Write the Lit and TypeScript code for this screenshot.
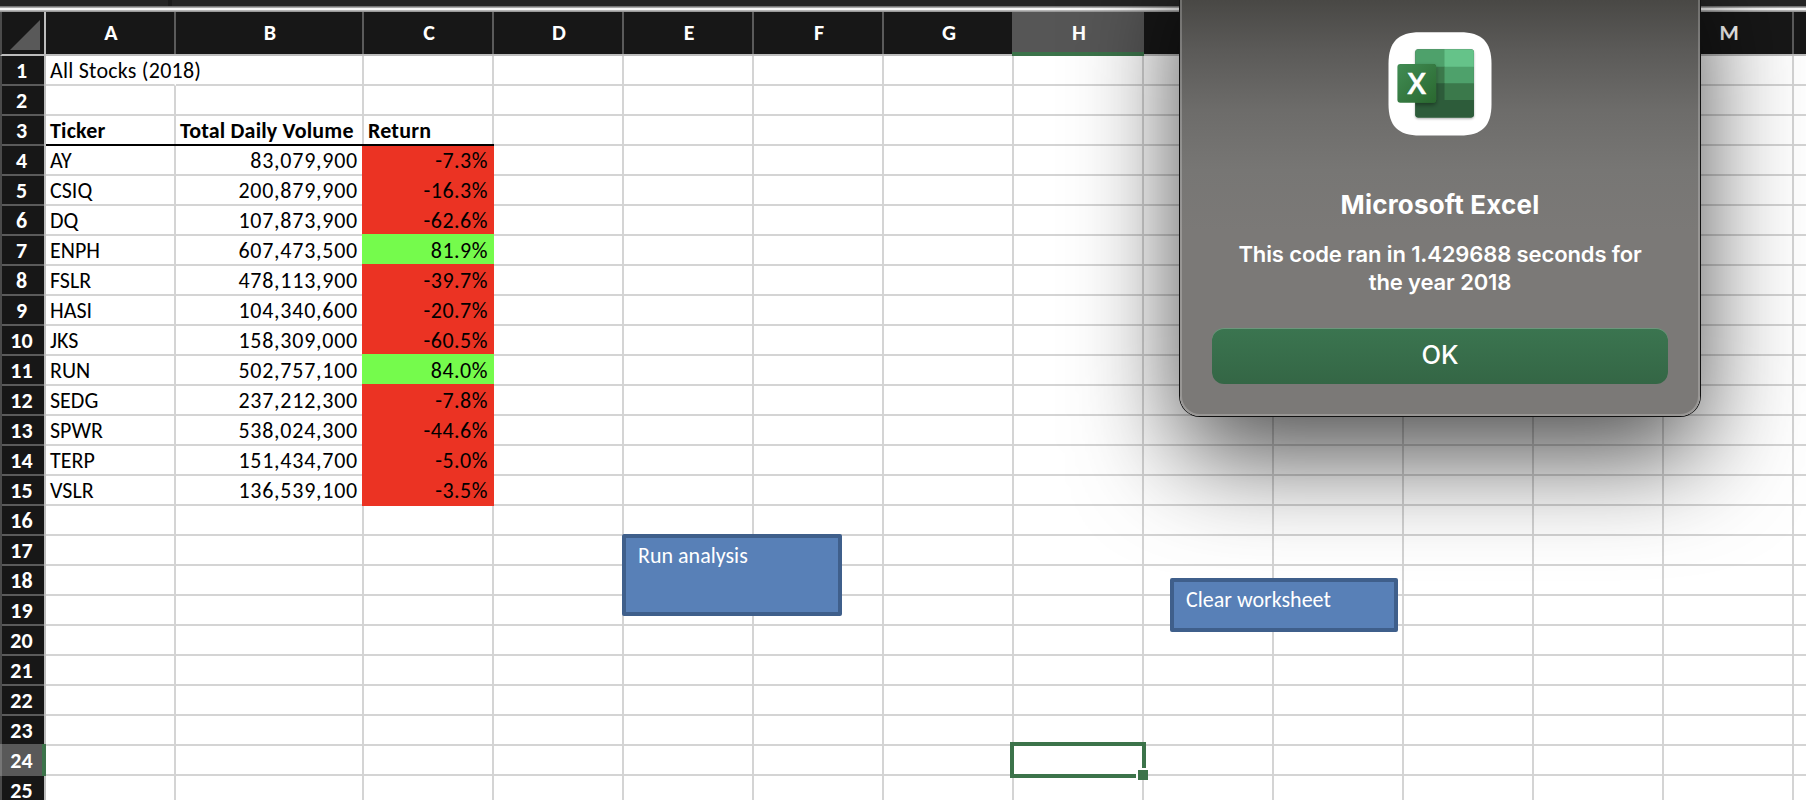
import { LitElement, html, css, svg, nothing } from "lit";
import { customElement } from "lit/decorators.js";
import { classMap } from "lit/directives/class-map.js";

interface Stock { ticker: string; volume: string; ret: string; }

const STOCKS: Stock[] = [
  ["AY", "83,079,900", "-7.3%"],
  ["CSIQ", "200,879,900", "-16.3%"],
  ["DQ", "107,873,900", "-62.6%"],
  ["ENPH", "607,473,500", "81.9%"],
  ["FSLR", "478,113,900", "-39.7%"],
  ["HASI", "104,340,600", "-20.7%"],
  ["JKS", "158,309,000", "-60.5%"],
  ["RUN", "502,757,100", "84.0%"],
  ["SEDG", "237,212,300", "-7.8%"],
  ["SPWR", "538,024,300", "-44.6%"],
  ["TERP", "151,434,700", "-5.0%"],
  ["VSLR", "136,539,100", "-3.5%"],
].map(([ticker, volume, ret]) => ({ ticker, volume, ret }));

const COLUMNS = "ABCDEFGHIJKLMN".split("");
const ROWS = Array.from({ length: 25 }, (_, i) => i + 1);
const ACTIVE = { col: "H", row: 24 };

@customElement("sheet-grid")
export class SheetGrid extends LitElement {
  static styles = css`
    :host { display: block; font-family: Carlito, Lato, sans-serif; color: #000; }
    .grid {
      display: grid;
      grid-template-columns: 46px 130px 188px repeat(12, 130px);
      grid-template-rows: 44px;
      grid-auto-rows: 30px;
    }
    .corner, .col, .row, .cell { box-sizing: border-box; white-space: nowrap; min-width: 0; }
    .corner { background: #171717; border-right: 2px solid #bdbdbd; border-bottom: 2px solid #bdbdbd; border-left: 2px solid #4b4b4b; }
    .corner svg { display: block; }
    .col {
      background: linear-gradient(#5b5b5b, #5b5b5b) right / 2px 100% no-repeat #171717;
      border-bottom: 2px solid #bdbdbd;
      color: #fff; font-size: 22px; font-weight: 700; text-align: center;
      line-height: 42px;
    }
    .col.on { background: #565656; border-bottom: 4px solid #3c734a; margin-left: -2px; padding-left: 2px; z-index: 1; }
    .row {
      background: #171717; color: #fff; font-size: 22px; font-weight: 700;
      border-left: 2px solid #4b4b4b; border-right: 2px solid #bdbdbd;
      text-align: center; line-height: 30px; padding-right: 3px;
      box-shadow: inset 0 -2px #5b5b5b;
    }
    .row.on { background: #595959; border-left-color: #767676; border-right: 4px solid #3c734a; margin-top: -2px; padding: 2px 1px 0 0; box-shadow: none; z-index: 1; }
    .cell {
      border-right: 2px solid #d4d4d4; border-bottom: 2px solid #d4d4d4;
      padding: 0 4px; font-size: 22px; line-height: 30px; background: #fff;
    }
    .cell.open { border-right-color: #fff; overflow: visible; }
    .spill { position: relative; z-index: 1; letter-spacing: .23px; }
    .head { font-weight: 700; height: 28px; border-bottom: 0; box-shadow: 0 2px #000; position: relative; z-index: 1; letter-spacing: .18px; }
    .num { text-align: right; letter-spacing: .75px; }
    .pct { margin: -2px 0 0 -2px; padding-top: 2px; letter-spacing: .5px; }
    .neg { background: #eb3323; border-color: #eb3323; }
    .pos { background: #75fb4c; border-color: #75fb4c; }
  `;

  private cell(col: string, row: number) {
    const stock = STOCKS[row - 4];
    if (row === 1 && col === "A") return html`<div class="cell open"><span class="spill">All Stocks (2018)</span></div>`;
    if (row === 3 && col < "D") {
      const label = { A: "Ticker", B: "Total Daily Volume", C: "Return" }[col];
      return html`<div class="cell head">${label}</div>`;
    }
    if (!stock || col > "C") return html`<div class="cell"></div>`;
    if (col === "A") return html`<div class="cell">${stock.ticker}</div>`;
    if (col === "B") return html`<div class="cell num">${stock.volume}</div>`;
    const neg = stock.ret.startsWith("-");
    return html`<div class=${classMap({ cell: true, num: true, pct: true, neg, pos: !neg })}>${stock.ret}</div>`;
  }

  render() {
    return html`<div class="grid">
      <div class="corner"><svg width="42" height="42"><path d="M8 38 38 8V38Z" fill="#595959" /></svg></div>
      ${COLUMNS.map((c) => html`<div class=${classMap({ col: true, on: c === ACTIVE.col })}>${c === "N" ? nothing : c}</div>`)}
      ${ROWS.map((r) => html`
        <div class=${classMap({ row: true, on: r === ACTIVE.row })}>${r}</div>
        ${COLUMNS.map((c) => this.cell(c, r))}`)}
    </div>`;
  }
}

@customElement("excel-icon")
export class ExcelIcon extends LitElement {
  static styles = css`
    :host { display: block; }
    svg { display: block; overflow: visible; }
    .x { font: 600 29px "Open Sans", sans-serif; }
  `;
  render() {
    return svg`<svg width="104" height="104" viewBox="0 0 104 104">
      <defs>
        <linearGradient id="t" x1="0" y1="0" x2="1" y2="1"><stop offset="0" stop-color="#418c54"/><stop offset="1" stop-color="#2a682f"/></linearGradient>
        <clipPath id="b"><rect x="27.3" y="17.2" width="58.6" height="68.4" rx="3"/></clipPath>
        <filter id="s" x="-30%" y="-30%" width="160%" height="160%"><feDropShadow dx="0" dy="2" stdDeviation="2" flood-opacity=".4"/></filter>
        <filter id="w" x="-30%" y="-30%" width="160%" height="160%"><feDropShadow dx="0" dy="1.2" stdDeviation=".8" flood-opacity=".35"/></filter>
      </defs>
      <path d="M32 .3H72C94 .3 103.5 10 103.5 32V72C103.5 94 94 103.5 72 103.5H32C10 103.5 .5 94 .5 72V32C.5 10 10 .3 32 .3Z" fill="#fff"/>
      <rect x="27.3" y="17.2" width="58.6" height="68.4" rx="3" fill="#2d5c3a" filter="url(#w)"/>
      <g clip-path="url(#b)">
        <path d="M27 17H57V35H27Z" fill="#4ea16b"/><path d="M56.500 17H87V35H56.500Z" fill="#65c389"/>
        <path d="M27 34.800H57V52H27Z" fill="#3b794b"/><path d="M56.500 34.800H87V52H56.500Z" fill="#4ea16b"/>
        <path d="M27 51.300H57V69H27Z" fill="#2d5c3a"/><path d="M56.500 51.300H87V68H56.500Z" fill="#3b794b"/>
        <path d="M27 68H87V86H27Z" fill="#2d5c3a"/>
      </g>
      <g clip-path="url(#b)"><rect x="9.400" y="32" width="38.700" height="38.700" rx="3" fill="#2a682f" filter="url(#s)"/></g>
      <rect x="9.400" y="32" width="38.700" height="38.700" rx="3" fill="url(#t)"/>
      <text class="x" x="28.800" y="62" text-anchor="middle" fill="#fff" stroke="#fff" stroke-width=".5" textLength="18.500" lengthAdjust="spacingAndGlyphs">X</text>
    </svg>`;
  }
}

@customElement("message-dialog")
export class MessageDialog extends LitElement {
  static styles = css`
    :host {
      box-sizing: border-box; display: flex; flex-direction: column; align-items: center;
      width: 520px; height: 476px; padding: 92px 32px 0; border-radius: 20px;
      background: linear-gradient(#494845 60px, #5b5a58 110px, #6d6c6a 170px, #777674 230px, #7b7977 290px);
      box-shadow: inset 0 0 0 2px rgba(255,255,255,.22), 0 0 0 1px #111, 0 40px 104px rgba(0,0,0,.7);
      color: #fff; font-family: Inter, sans-serif; text-align: center;
    }
    h1 { margin: 52px 0 0; font-size: 26px; line-height: 34px; font-weight: 700; letter-spacing: .18px; white-space: nowrap; }
    p { margin: 18px 0 0; font-size: 22px; line-height: 28px; font-weight: 600; letter-spacing: -.12px; white-space: nowrap; }
    button {
      margin: 32px 0 0; width: 456px; height: 56px; border: 0; border-radius: 12px; padding: 0 0 3px;
      background: linear-gradient(#3b7550, #346645); box-shadow: inset 0 1px rgba(255,255,255,.25);
      color: #fff; font: 500 25.5px Inter, sans-serif;
    }
  `;
  render() {
    return html`<excel-icon></excel-icon>
      <h1>Microsoft Excel</h1>
      <p>This code ran in 1.429688 seconds for<br />the year 2018</p>
      <button>OK</button>`;
  }
}

@customElement("app-root")
export class AppRoot extends LitElement {
  static styles = css`
    :host { display: block; position: relative; width: 1806px; height: 800px; overflow: hidden; background: #fff; }
    .bar { height: 6px; background: linear-gradient(#1c1c1c, #1c1c1c) 168px 0 / 4px 100% no-repeat #262626; }
    .rule { height: 6px; background: linear-gradient(#777 0 1px, #aaa 1px 2px, #f8f8f8 2px 4px, #b5b5b5 4px 5px, #999 5px 6px); }
    .selection { position: absolute; left: 1010px; top: 742px; width: 136px; height: 36px; box-sizing: border-box; border: 4px solid #3c734a; z-index: 2; }
    .handle { position: absolute; right: -6px; bottom: -6px; width: 10px; height: 10px; background: #3c734a; border: 2px solid #fff; border-right-width: 0; border-bottom-width: 0; }
    .shape {
      position: absolute; z-index: 4; box-sizing: border-box; background: #5880b7; border: 4px solid #3f5f8b; border-radius: 2px;
      color: #fff; font: 22px/28px Carlito, Lato, sans-serif; padding: 4px 12px; white-space: nowrap;
    }
    .run { left: 622px; top: 534px; width: 220px; height: 82px; }
    .clear { left: 1170px; top: 578px; width: 228px; height: 54px; }
    .dialog { position: absolute; left: 1180px; top: -60px; z-index: 3; }
  `;
  render() {
    return html`
      <div class="bar"></div>
      <div class="rule"></div>
      <sheet-grid></sheet-grid>
      <div class="selection"><div class="handle"></div></div>
      <div class="shape run">Run analysis</div>
      <div class="shape clear">Clear worksheet</div>
      <message-dialog class="dialog"></message-dialog>
    `;
  }
}
